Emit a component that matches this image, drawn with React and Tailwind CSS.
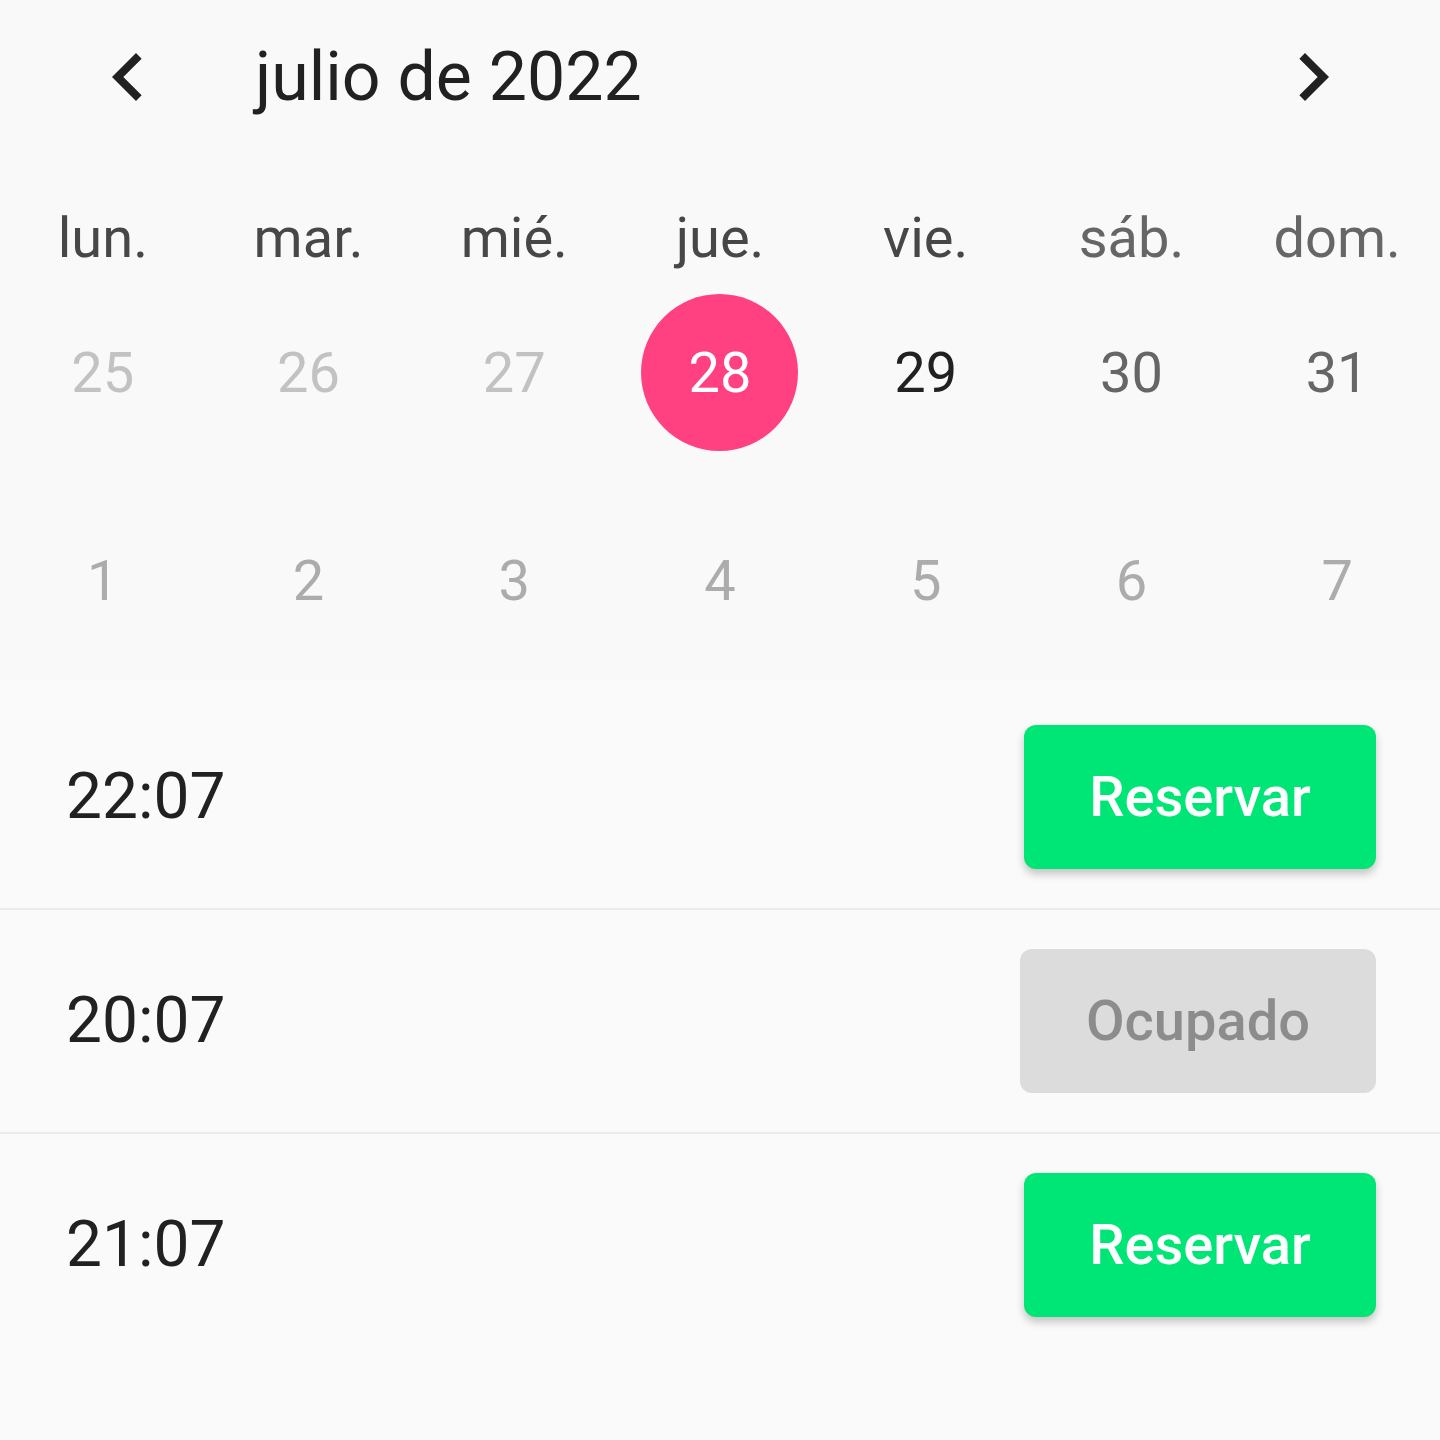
import { useState } from 'react';

const WEEKDAYS = [
  { label: 'lun.', weekend: false },
  { label: 'mar.', weekend: false },
  { label: 'mié.', weekend: false },
  { label: 'jue.', weekend: false },
  { label: 'vie.', weekend: false },
  { label: 'sáb.', weekend: true },
  { label: 'dom.', weekend: true },
];

const WEEKS = [
  [
    { day: 25, kind: 'past' },
    { day: 26, kind: 'past' },
    { day: 27, kind: 'past' },
    { day: 28, kind: 'selected' },
    { day: 29, kind: 'normal' },
    { day: 30, kind: 'weekend' },
    { day: 31, kind: 'weekend' },
  ],
  [1, 2, 3, 4, 5, 6, 7].map((day) => ({ day, kind: 'next' })),
];

const SLOTS = [
  { time: '22:07', free: true },
  { time: '20:07', free: false },
  { time: '21:07', free: true },
];

const dayColor = {
  past: 'text-[#c2c2c2]',
  next: 'text-[#acacac]',
  normal: 'text-[#212121]',
  weekend: 'text-[#666666]',
  selected: 'text-white',
};

const Chevron = ({ dir }) => (
  <svg viewBox="0 0 24 24" className="w-[96px] h-[96px] fill-[#212121]">
    {dir === 'left' ? (
      <path d="M15.41 7.41L14 6l-6 6 6 6 1.41-1.41L10.83 12z" />
    ) : (
      <path d="M10 6L8.59 7.41 13.17 12l-4.58 4.59L10 18l6-6z" />
    )}
  </svg>
);

const App = () => {
  const [selected, setSelected] = useState(28);

  return (
    <div className="w-full min-h-[1440px] bg-[#fafafa] font-['Roboto',sans-serif]">
      <div className="bg-[#f9f9f9] pb-[27px]">
        <div className="flex items-center h-[154px] pl-[80px] pr-[79px]">
          <Chevron dir="left" />
          <h1 className="ml-[79px] text-[68px] leading-none text-[#212121] font-normal">julio de 2022</h1>
          <div className="ml-auto">
            <Chevron dir="right" />
          </div>
        </div>

        <div className="grid grid-cols-7 mt-[56px] h-[56px]">
          {WEEKDAYS.map((w) => (
            <div
              key={w.label}
              className={`text-center text-[56px] leading-none ${w.weekend ? 'text-[#666666]' : 'text-[#474747]'}`}
            >
              {w.label}
            </div>
          ))}
        </div>

        <div className="flex flex-col gap-[51px] mt-[28px]">
          {WEEKS.map((week, i) => (
            <div key={i} className="grid grid-cols-7 h-[157px]">
              {week.map((d) => {
                const isSel = d.kind === 'selected' && selected === d.day;
                return (
                  <div key={d.day} className="flex items-center justify-center">
                    <button
                      onClick={() => setSelected(d.day)}
                      className={`w-[157px] h-[157px] rounded-full flex items-center justify-center text-[56px] leading-none ${
                        isSel ? 'bg-[#ff4081]' : ''
                      } ${dayColor[d.kind]}`}
                    >
                      {d.day}
                    </button>
                  </div>
                );
              })}
            </div>
          ))}
        </div>
      </div>

      <div>
        {SLOTS.map((s, i) => (
          <div
            key={s.time}
            className={`flex items-center justify-between h-[224px] pl-[66px] pr-[64px] border-b-2 ${
              i < SLOTS.length - 1 ? 'border-[#ebebeb]' : 'border-transparent'
            }`}
          >
            <span className="text-[64px] leading-none text-[#212121]">{s.time}</span>
            {s.free ? (
              <button className="w-[352px] h-[144px] rounded-[12px] bg-[#00e676] text-white text-[56px] font-medium leading-none shadow-[0_5px_8px_rgba(0,0,0,0.22)]">
                Reservar
              </button>
            ) : (
              <button
                disabled
                className="w-[356px] h-[144px] rounded-[12px] bg-[#dcdcdc] text-[#8c8c8c] text-[56px] font-medium leading-none"
              >
                Ocupado
              </button>
            )}
          </div>
        ))}
      </div>
    </div>
  );
};

export default App;
